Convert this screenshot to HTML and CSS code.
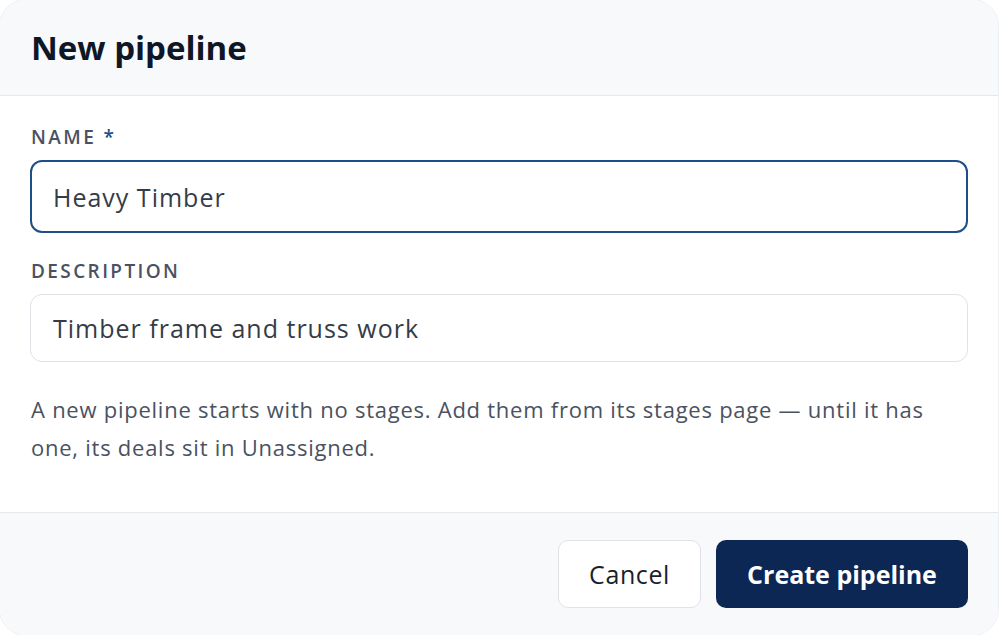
FILE: index.html
```html
<!DOCTYPE html>
<html lang="en">
<head>
<meta charset="utf-8">
<title>New pipeline</title>
<link rel="stylesheet" href="styles.css">
</head>
<body>
<div class="dialog">
  <header class="dialog-header">
    <h1 class="dialog-title">New pipeline</h1>
  </header>
  <main class="dialog-body">
    <div class="field">
      <label class="field-label" for="name">NAME <span class="req">*</span></label>
      <div class="input input-focus" id="name">Heavy Timber</div>
    </div>
    <div class="field">
      <label class="field-label" for="desc">DESCRIPTION</label>
      <div class="input" id="desc">Timber frame and truss work</div>
    </div>
    <p class="hint">A new pipeline starts with no stages. Add them from its stages page — until it has one, its deals sit in Unassigned.</p>
  </main>
  <footer class="dialog-footer">
    <button class="btn btn-secondary">Cancel</button>
    <button class="btn btn-primary">Create pipeline</button>
  </footer>
</div>
</body>
</html>
```
FILE: styles.css
```css
* { box-sizing: border-box; }
html, body { margin: 0; padding: 0; background: #ffffff; }
body {
  font-family: "Open Sans", "Noto Sans", sans-serif;
  width: 1000px;
  height: 635px;
  overflow: hidden;
}
.dialog {
  width: 998px;
  height: 635px;
  border-radius: 26px;
  background: #ffffff;
  overflow: hidden;
  display: flex;
  flex-direction: column;
  box-shadow: 0 0 0 1px #eef0f3;
}
.dialog-header {
  height: 96px;
  background: #f8f9fb;
  border-bottom: 1px solid #e6e8ec;
  padding: 0 31px;
  display: flex;
  align-items: center;
}
.dialog-title {
  margin: 0;
  font-size: 33px;
  font-weight: 700;
  color: #0f1626;
  letter-spacing: 0;
}
.dialog-body {
  flex: 1;
  padding: 28px 30px 0 30px;
  display: flex;
  flex-direction: column;
}
.field { display: flex; flex-direction: column; }
.field + .field { margin-top: 25px; }
.field-label {
  font-size: 19px;
  font-weight: 600;
  letter-spacing: 2.4px;
  color: #4a5261;
  margin: 0 0 10px 1px;
  line-height: 26px;
}
.req { color: #1d4e89; }
.input {
  height: 68px;
  border: 1px solid #dfe2e7;
  border-radius: 12px;
  padding: 0 22px;
  display: flex;
  align-items: center;
  font-size: 25px;
  letter-spacing: 1px;
  color: #353c48;
  background: #fff;
}
.input-focus {
  height: 73px;
  border: 2px solid #1d4e89;
  padding: 0 21px;
}
.hint {
  margin: 28px 0 0 1px;
  font-size: 22px;
  letter-spacing: 0.75px;
  line-height: 38px;
  color: #4a5261;
}
.dialog-footer {
  height: 123px;
  background: #f8f9fb;
  border-top: 1px solid #e6e8ec;
  display: flex;
  justify-content: flex-end;
  align-items: center;
  gap: 15px;
  padding: 0 30px 0 0;
}
.btn {
  height: 68px;
  border-radius: 10px;
  font-family: inherit;
  font-size: 25px;
  padding: 0;
  cursor: pointer;
}
.btn-secondary {
  width: 143px;
  background: #ffffff;
  border: 1px solid #dfe2e7;
  color: #1a1f2b;
  letter-spacing: 0.6px;
}
.btn-primary {
  width: 252px;
  background: #0c2754;
  border: none;
  color: #ffffff;
  font-weight: 700;
}
```
